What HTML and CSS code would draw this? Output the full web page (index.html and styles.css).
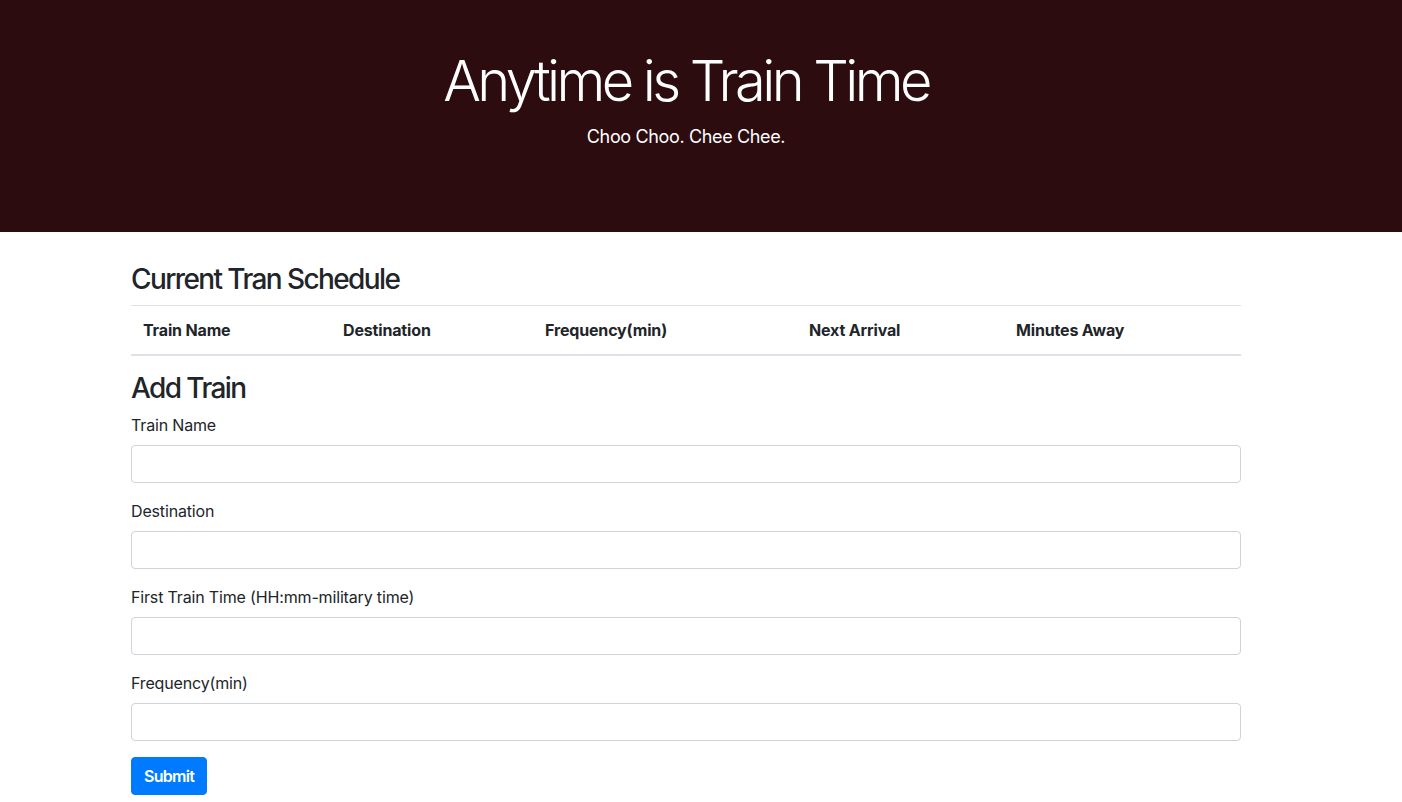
FILE: index.html
```html
<!DOCTYPE html>
<html lang="en">
<head>
<meta charset="utf-8">
<title>Train Time</title>
<link rel="stylesheet" href="styles.css">
</head>
<body>
<header class="jumbotron">
  <div class="container">
    <h1 class="display">Anytime is Train Time</h1>
    <p class="lead">Choo Choo. Chee Chee.</p>
  </div>
</header>
<main class="container">
  <h3 class="heading">Current Tran Schedule</h3>
  <table class="schedule">
    <thead>
      <tr>
        <th class="c1">Train Name</th>
        <th class="c2">Destination</th>
        <th class="c3">Frequency(min)</th>
        <th class="c4">Next Arrival</th>
        <th class="c5">Minutes Away</th>
      </tr>
    </thead>
    <tbody></tbody>
  </table>
  <h3 class="heading">Add Train</h3>
  <form class="train-form">
    <div class="form-group">
      <label for="name">Train Name</label>
      <input id="name" class="form-control" type="text">
    </div>
    <div class="form-group">
      <label for="dest">Destination</label>
      <input id="dest" class="form-control" type="text">
    </div>
    <div class="form-group">
      <label for="first">First Train Time (HH:mm-military time)</label>
      <input id="first" class="form-control" type="text">
    </div>
    <div class="form-group">
      <label for="freq">Frequency(min)</label>
      <input id="freq" class="form-control" type="text">
    </div>
    <button type="button" class="btn">Submit</button>
  </form>
</main>
</body>
</html>
```
FILE: styles.css
```css
* { box-sizing: border-box; }
html, body { margin: 0; padding: 0; }
body {
  font-family: Inter, "Liberation Sans", sans-serif;
  font-size: 16px;
  line-height: 1.5;
  color: #212529;
  background: #fff;
  letter-spacing: -0.01em;
}
.container {
  width: 1140px;
  margin: 0 auto;
  padding: 0 30px 0 0;
}
.jumbotron {
  background: #2c0c0e;
  color: #fff;
  height: 232px;
  padding-top: 48px;
  margin-bottom: 31px;
  text-align: center;
}
.display {
  font-size: 56px;
  font-weight: 300;
  line-height: 1.2;
  margin: 0 0 8px;
  letter-spacing: -3.6px;
}
.lead {
  font-size: 18px;
  margin: 0;
  line-height: 27px;
  letter-spacing: -0.02em;
}
.heading {
  font-size: 28px;
  font-weight: 500;
  line-height: 1.2;
  margin: 0 0 8px;
  letter-spacing: -1.6px;
}
.schedule {
  width: 100%;
  border-collapse: collapse;
  margin-bottom: 16px;
}
.schedule th {
  text-align: left;
  font-weight: 700;
  padding: 12px;
  border-top: 1px solid #dee2e6;
  border-bottom: 2px solid #dee2e6;
  vertical-align: bottom;
}
.c1 { width: 200px; }
.c2 { width: 202px; }
.c3 { width: 264px; }
.c4 { width: 207px; }
.c5 { width: 237px; }
.form-group { margin-bottom: 16px; }
label {
  display: inline-block;
  margin-bottom: 8px;
}
.form-control {
  display: block;
  width: 100%;
  height: 38px;
  padding: 6px 12px;
  font: inherit;
  border: 1px solid #ced4da;
  border-radius: 4px;
  background: #fff;
}
.btn {
  font: inherit;
  font-weight: 600;
  letter-spacing: -0.7px;
  color: #fff;
  background: #007bff;
  border: 1px solid #007bff;
  border-radius: 4px;
  padding: 6px 12px;
  line-height: 24px;
  cursor: pointer;
}
```
